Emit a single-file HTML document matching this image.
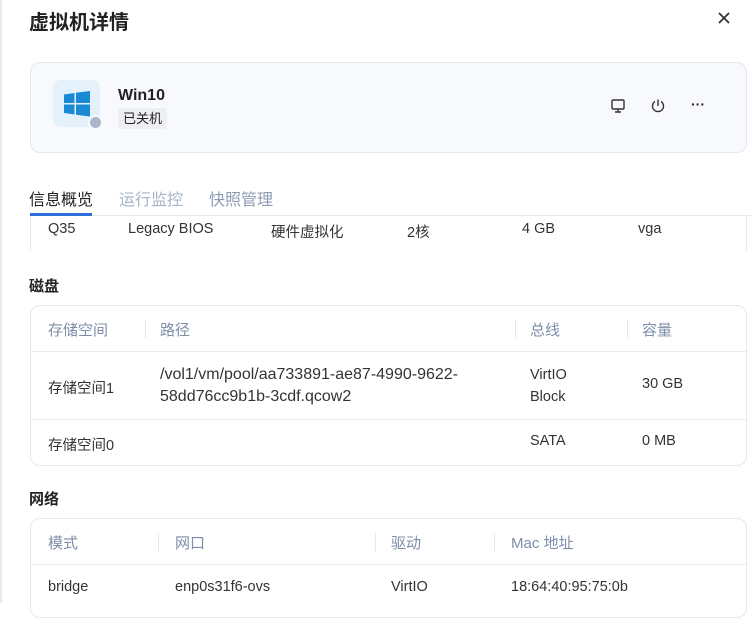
<!DOCTYPE html><html><head><meta charset="utf-8"><style>
*{margin:0;padding:0;box-sizing:border-box}
body{width:751px;height:603px;overflow:hidden;background:#fff;font-family:"Liberation Sans","Noto Sans CJK SC",sans-serif;color:#222;position:relative}
.a{position:absolute;white-space:nowrap}
.card{position:absolute;left:30px;width:717px;border:1px solid #e3e7ee;border-radius:10px;background:#fff}
.h{color:#7f8ea8;font-size:15px}
.t{font-size:14.5px;color:#333}
.sep{position:absolute;width:1px;height:18px;background:#e3e7ee}
.hl{position:absolute;left:0;right:0;height:1px;background:#e8ebf0}
</style></head><body>
<div class="a" style="left:0;top:0;width:2px;height:603px;background:#e6e9ee"></div>
<div class="a" style="left:29px;top:6px;font-size:20px;font-weight:bold;color:#222">虚拟机详情</div>
<svg class="a" style="left:717px;top:11px" width="14" height="14" viewBox="0 0 14 14"><path d="M2 2L12 12M12 2L2 12" stroke="#333" stroke-width="1.8"/></svg>
<div class="card" style="top:62px;height:91px;background:#f8f9fc"></div>
<div class="a" style="left:53px;top:80px;width:47px;height:47px;border-radius:8px;background:#e4f1fa"></div>
<svg class="a" style="left:64px;top:91px" width="26" height="26" viewBox="0 0 26 26"><path d="M0 3.5L10.5 2V12H0ZM12 1.8L26 0V12H12ZM0 13.5H10.5V23.5L0 22ZM12 13.5H26V25.5L12 23.7Z" fill="#1a8ad4"/></svg>
<div class="a" style="left:88px;top:115px;width:15px;height:15px;border-radius:50%;background:#a9b6c8;border:2px solid #f8f9fc"></div>
<div class="a" style="left:118px;top:87px;font-size:16px;font-weight:bold">Win10</div>
<div class="a" style="left:118px;top:108px;height:21px;padding:0 5px;background:#eeeff2;border-radius:4px;font-size:13px;line-height:21px">已关机</div>
<svg class="a" style="left:610px;top:98px" width="16" height="16" viewBox="0 0 16 16" fill="none" stroke="#333" stroke-width="1.4"><rect x="2" y="2" width="12" height="9" rx="1"/><path d="M8 11V14M5 14H11"/></svg>
<svg class="a" style="left:650px;top:98px" width="16" height="16" viewBox="0 0 16 16" fill="none" stroke="#333" stroke-width="1.4"><path d="M8 1.5V8M5 3.5A5.5 5.5 0 1 0 11 3.5"/></svg>
<div class="a" style="left:691px;top:96px;font-size:14px;font-weight:bold;letter-spacing:0px">···</div>
<div class="a" style="left:29px;top:186px;font-size:16px;color:#222">信息概览</div>
<div class="a" style="left:119px;top:186px;font-size:16px;color:#a7b3c6">运行监控</div>
<div class="a" style="left:209px;top:186px;font-size:16px;color:#8d9bb3">快照管理</div>
<div class="a" style="left:30px;top:215px;width:721px;height:1px;background:#e3e7ee"></div>
<div class="a" style="left:30px;top:213px;width:62px;height:3px;background:#2a6fdc"></div>
<div class="a" style="left:30px;top:216px;width:1px;height:35px;background:#e3e7ee"></div>
<div class="a" style="left:746px;top:216px;width:1px;height:35px;background:#e3e7ee"></div>
<div class="a t" style="left:48px;top:221px">Q35</div>
<div class="a t" style="left:128px;top:221px">Legacy BIOS</div>
<div class="a t" style="left:271px;top:221px">硬件虚拟化</div>
<div class="a t" style="left:407px;top:221px">2核</div>
<div class="a t" style="left:522px;top:221px">4 GB</div>
<div class="a t" style="left:638px;top:221px">vga</div>
<div class="a" style="left:29px;top:275px;font-size:15px;font-weight:bold">磁盘</div>
<div class="card" style="top:305px;height:161px">
<div class="sep" style="left:114px;top:14px"></div><div class="sep" style="left:484px;top:14px"></div><div class="sep" style="left:596px;top:14px"></div>
<div class="hl" style="top:45px"></div><div class="hl" style="top:113px"></div>
</div>
<div class="a h" style="left:48px;top:319px">存储空间</div>
<div class="a h" style="left:160px;top:319px">路径</div>
<div class="a h" style="left:530px;top:319px">总线</div>
<div class="a h" style="left:642px;top:319px">容量</div>
<div class="a t" style="left:48px;top:377px">存储空间1</div>
<div class="a t" style="left:160px;top:364px;line-height:22px;font-size:16px">/vol1/vm/pool/aa733891-ae87-4990-9622-<br>58dd76cc9b1b-3cdf.qcow2</div>
<div class="a t" style="left:530px;top:364px;line-height:22px">VirtIO<br>Block</div>
<div class="a t" style="left:642px;top:376px">30 GB</div>
<div class="a t" style="left:48px;top:434px">存储空间0</div>
<div class="a t" style="left:530px;top:433px">SATA</div>
<div class="a t" style="left:642px;top:433px">0 MB</div>
<div class="a" style="left:29px;top:488px;font-size:15px;font-weight:bold">网络</div>
<div class="card" style="top:518px;height:100px">
<div class="sep" style="left:127px;top:14px"></div><div class="sep" style="left:344px;top:14px"></div><div class="sep" style="left:463px;top:14px"></div>
<div class="hl" style="top:45px"></div>
</div>
<div class="a h" style="left:48px;top:532px">模式</div>
<div class="a h" style="left:175px;top:532px">网口</div>
<div class="a h" style="left:391px;top:532px">驱动</div>
<div class="a h" style="left:511px;top:532px">Mac 地址</div>
<div class="a t" style="left:48px;top:579px">bridge</div>
<div class="a t" style="left:175px;top:579px">enp0s31f6-ovs</div>
<div class="a t" style="left:391px;top:579px">VirtIO</div>
<div class="a t" style="left:511px;top:579px">18:64:40:95:75:0b</div>
</body></html>
